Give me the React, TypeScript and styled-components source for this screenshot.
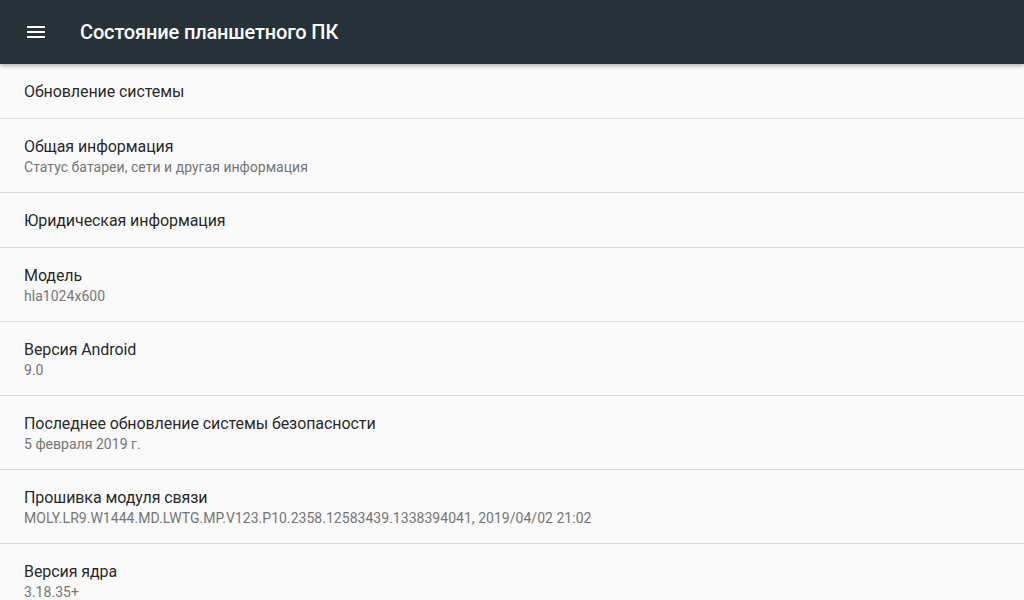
import React from "react";
import styled, { createGlobalStyle } from "styled-components";

const Global = createGlobalStyle`
  html, body { margin: 0; padding: 0; background: #fafafa; }
  body { font-family: Roboto, "Noto Sans", sans-serif; overflow: hidden; }
`;

const Page = styled.div`
  width: 1024px;
  height: 600px;
  overflow: hidden;
  background: #fafafa;
  display: flex;
  flex-direction: column;
`;

const Toolbar = styled.header`
  height: 64px;
  flex: 0 0 64px;
  background: #263238;
  display: flex;
  align-items: center;
  box-shadow: 0 2px 4px rgba(0, 0, 0, 0.28);
  position: relative;
  z-index: 1;
`;

const MenuButton = styled.div`
  width: 80px;
  height: 64px;
  display: flex;
  align-items: center;
  padding-left: 27px;
  box-sizing: border-box;
`;

const Title = styled.h1`
  margin: 0;
  color: #ffffff;
  font-size: 20px;
  font-weight: 500;
  letter-spacing: -0.15px;
`;

const List = styled.div`
  display: flex;
  flex-direction: column;
`;

const Item = styled.div`
  padding: 17px 24px 15px 24px;
  border-bottom: 1px solid #dcdcdc;
  display: flex;
  flex-direction: column;
`;

const ItemTitle = styled.div`
  font-size: 16px;
  line-height: 22px;
  letter-spacing: -0.08px;
  color: rgba(0, 0, 0, 0.87);
`;

const ItemSummary = styled.div`
  font-size: 14px;
  line-height: 19px;
  letter-spacing: 0.03px;
  color: #757575;
`;

const items: { title: string; summary?: string }[] = [
  { title: "Обновление системы" },
  { title: "Общая информация", summary: "Статус батареи, сети и другая информация" },
  { title: "Юридическая информация" },
  { title: "Модель", summary: "hla1024x600" },
  { title: "Версия Android", summary: "9.0" },
  { title: "Последнее обновление системы безопасности", summary: "5 февраля 2019 г." },
  {
    title: "Прошивка модуля связи",
    summary: "MOLY.LR9.W1444.MD.LWTG.MP.V123.P10.2358.12583439.1338394041, 2019/04/02 21:02",
  },
  { title: "Версия ядра", summary: "3.18.35+" },
];

export default function App() {
  return (
    <Page>
      <Global />
      <Toolbar>
        <MenuButton>
          <svg width="18" height="12" viewBox="0 0 18 12">
            <rect x="0" y="0" width="18" height="2" fill="#fff" />
            <rect x="0" y="5" width="18" height="2" fill="#fff" />
            <rect x="0" y="10" width="18" height="2" fill="#fff" />
          </svg>
        </MenuButton>
        <Title>Состояние планшетного ПК</Title>
      </Toolbar>
      <List>
        {items.map((it) => (
          <Item key={it.title}>
            <ItemTitle>{it.title}</ItemTitle>
            {it.summary && <ItemSummary>{it.summary}</ItemSummary>}
          </Item>
        ))}
      </List>
    </Page>
  );
}
